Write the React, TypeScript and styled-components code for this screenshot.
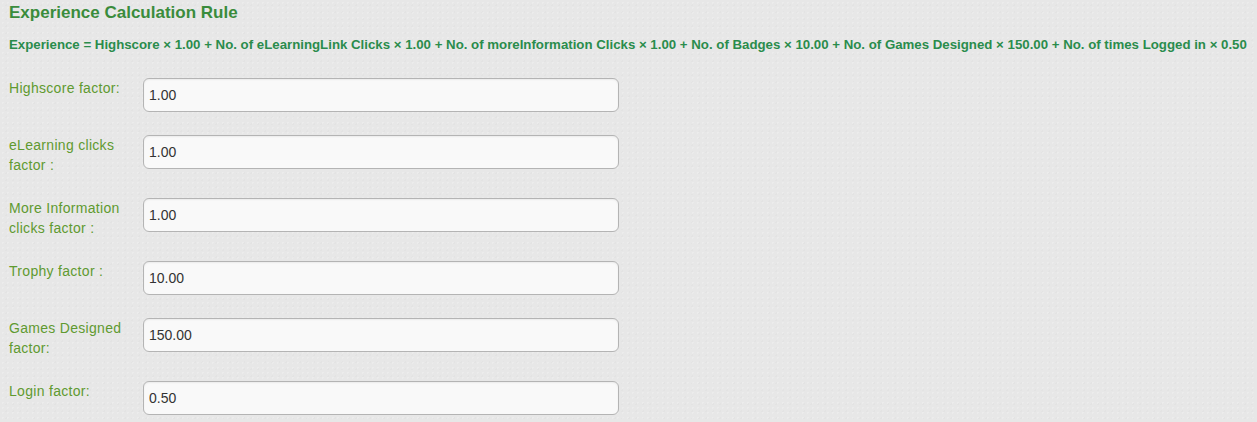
import React from "react";
import styled, { createGlobalStyle } from "styled-components";

const Global = createGlobalStyle`
  html, body {
    margin: 0;
    padding: 0;
    background: #e8e8e8;
    font-family: "Liberation Sans", Arial, sans-serif;
  }
`;

const Page = styled.div`
  padding: 4px 9px 0 9px;
  background-color: #e7e7e7;
  background-image: radial-gradient(rgba(255, 255, 255, 0.22) 1px, transparent 1px),
    radial-gradient(rgba(0, 0, 0, 0.015) 1px, transparent 1px);
  background-size: 5px 5px, 7px 7px;
  background-position: 0 0, 3px 2px;
  min-height: 422px;
  box-sizing: border-box;
`;

const Title = styled.h3`
  margin: 0;
  font-size: 17px;
  line-height: 18px;
  font-weight: bold;
  color: #3a8c3c;
`;

const Formula = styled.p`
  margin: 15px 0 0 0;
  font-size: 13.25px;
  line-height: 16px;
  font-weight: bold;
  color: #2a8c4c;
  white-space: nowrap;
`;

const Form = styled.div`
  margin-top: 25px;
  display: flex;
  flex-direction: column;
`;

const Row = styled.div<{ $tall?: boolean }>`
  display: grid;
  grid-template-columns: 134px 476px;
  align-items: start;
  margin-bottom: ${(p) => (p.$tall ? "23.5px" : "23px")};
`;

const Label = styled.label`
  font-size: 14px;
  letter-spacing: 0.3px;
  line-height: 20px;
  color: #5f9a30;
  width: 124px;
`;

const Input = styled.input`
  box-sizing: border-box;
  width: 476px;
  height: 34px;
  padding: 0 5px;
  font-family: "Liberation Sans", Arial, sans-serif;
  font-size: 14px;
  color: #333;
  background: #f9f9f9;
  border: 1px solid #b4b4b4;
  border-radius: 6px;
  box-shadow: inset 0 1px 2px rgba(0, 0, 0, 0.06);
  outline: none;
`;

const rows = [
  { label: "Highscore factor:", value: "1.00" },
  { label: "eLearning clicks factor :", value: "1.00" },
  { label: "More Information clicks factor :", value: "1.00" },
  { label: "Trophy factor :", value: "10.00" },
  { label: "Games Designed factor:", value: "150.00" },
  { label: "Login factor:", value: "0.50" },
];

export default function App() {
  return (
    <>
      <Global />
      <Page>
        <Title>Experience Calculation Rule</Title>
        <Formula>
          Experience = Highscore × 1.00 + No. of eLearningLink Clicks × 1.00 + No. of
          moreInformation Clicks × 1.00 + No. of Badges × 10.00 + No. of Games Designed ×
          150.00 + No. of times Logged in × 0.50
        </Formula>
        <Form>
          {rows.map((r) => (
            <Row key={r.label}>
              <Label>{r.label}</Label>
              <Input defaultValue={r.value} />
            </Row>
          ))}
        </Form>
      </Page>
    </>
  );
}
